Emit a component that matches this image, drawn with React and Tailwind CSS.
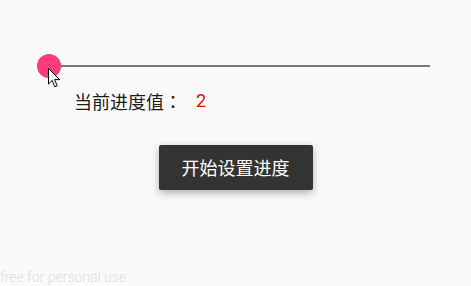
import React from 'react';

const App = () => {
    return (
        <div className="relative w-[471px] h-[286px] overflow-hidden bg-[#fafafa] font-['Roboto','Noto_Sans_CJK_SC',sans-serif]">
            {/* Seek bar */}
            <div className="pt-[54px] pl-[37px]">
                <div className="relative flex items-center w-[393px] h-[24px]">
                    <div className="ml-[12px] flex-1 h-[2px] bg-[#767676]"></div>
                    <div className="absolute left-0 top-0 w-[24px] h-[24px] rounded-full bg-[#fb3b7c]"></div>
                </div>
            </div>

            {/* Progress label */}
            <div className="mt-[11px] pl-[74px] flex items-center h-[24px] text-[18px] leading-[24px]">
                <span className="text-[#1a1a1a] font-['Noto_Sans_CJK_SC',sans-serif]">
                    当前进度值<span className="font-['Noto_Sans_CJK_TC',sans-serif]">：</span>
                </span>
                <span className="ml-[14px] text-[#ff0000]">2</span>
            </div>

            {/* Button */}
            <div className="mt-[32px] flex justify-center">
                <button className="w-[154px] h-[45px] rounded-[2px] bg-[#333333] text-white text-[18px] font-['Noto_Sans_CJK_SC',sans-serif] shadow-[0_3px_9px_rgba(0,0,0,0.3)]">
                    开始设置进度
                </button>
            </div>

            {/* Watermark */}
            <div className="absolute left-0 bottom-[1px] text-[14px] font-light leading-[16px] text-[#dedede]">
                free for personal use
            </div>

            {/* Mouse cursor */}
            <svg className="absolute left-[48px] top-[68px]" width="13" height="20" viewBox="0 0 13 20">
                <path d="M0.5 0.5 L0.5 16 L4.2 12.4 L6.8 18.8 L9.2 17.8 L6.6 11.6 L11.6 11.6 Z" fill="#ffffff" stroke="#000000" strokeWidth="1" strokeLinejoin="round" />
            </svg>
        </div>
    );
};

export default App;
